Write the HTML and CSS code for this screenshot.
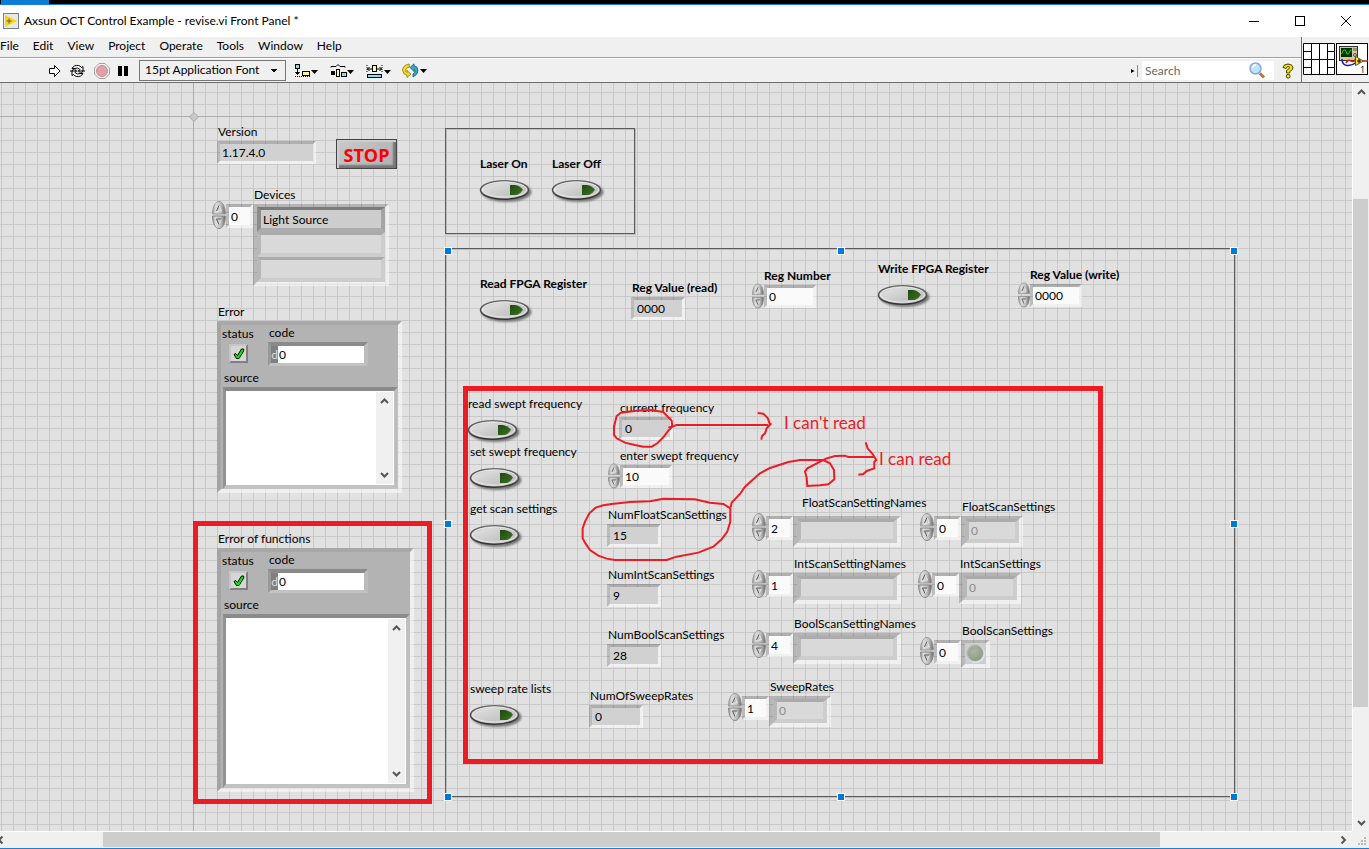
FILE: index.html
```html
<!DOCTYPE html>
<html lang="en">
<head>
<meta charset="utf-8">
<title>Axsun OCT Control Example - revise.vi Front Panel *</title>
<link rel="stylesheet" href="styles.css">
</head>
<body>
<svg class="defs" aria-hidden="true">
  <defs>
    <linearGradient id="pillFace" x1="0" y1="0" x2="1" y2="1">
      <stop offset="0" stop-color="#aeaeae"/><stop offset=".25" stop-color="#dadada"/><stop offset=".6" stop-color="#c8c8c8"/><stop offset="1" stop-color="#bdbdbd"/>
    </linearGradient>
    <linearGradient id="pillEdge" x1="0" y1="0" x2="0" y2="1">
      <stop offset="0" stop-color="#6a6a6a"/><stop offset="1" stop-color="#333"/>
    </linearGradient>
    <linearGradient id="pillLed" x1="0" y1="0" x2="1" y2="1">
      <stop offset="0" stop-color="#1d4a0c"/><stop offset="1" stop-color="#3f7328"/>
    </linearGradient>
    <filter id="soft" x="-20%" y="-40%" width="140%" height="180%"><feGaussianBlur stdDeviation="1.3"/></filter>
    <linearGradient id="spinFace" x1="0" y1="0" x2="1" y2="0">
      <stop offset="0" stop-color="#9a9a9a"/><stop offset=".25" stop-color="#dedede"/><stop offset=".65" stop-color="#bcbcbc"/><stop offset="1" stop-color="#666"/>
    </linearGradient>
    <radialGradient id="ledFace" cx=".4" cy=".35" r=".7">
      <stop offset="0" stop-color="#a9b8a0"/><stop offset="1" stop-color="#8b9a82"/>
    </radialGradient>
  </defs>
  <symbol id="pill" viewBox="0 0 56 28">
    <ellipse cx="29.500" cy="14" rx="25" ry="10" fill="#777" filter="url(#soft)"/>
    <ellipse cx="27.500" cy="12" rx="24" ry="9.200" fill="url(#pillFace)" stroke="url(#pillEdge)" stroke-width="1.500"/>
    <ellipse cx="27.500" cy="11.500" rx="22" ry="7.600" fill="none" stroke="#efefef" stroke-width=".8"/>
    <path d="M33 7h5q5 .8 8 4.800-2.500 4-6 5.200h-7z" fill="url(#pillLed)"/>
  </symbol>
  <symbol id="up" viewBox="0 0 14 14">
    <path d="M.5 13C.8 5 3.500.5 7 .5s6.200 4.500 6.500 12.500z" fill="url(#spinFace)" stroke="#999"/>
    <path d="M4.500 10 7 4.500l2.500 5.500z" fill="#c8c8c8" stroke="#eee" stroke-width=".8"/>
    <path d="M4.500 10 7 4.500" stroke="#555"/>
  </symbol>
  <symbol id="dn" viewBox="0 0 14 14">
    <path d="M.5 1C.8 9 3.500 13.500 7 13.500s6.200-4.500 6.500-12.500z" fill="url(#spinFace)" stroke="#888"/>
    <path d="M4.500 4h5L7 9.500z" fill="#c8c8c8" stroke="#eee" stroke-width=".8"/>
    <path d="M9.500 4h-5L7 9.500" fill="none" stroke="#555"/>
  </symbol>
  <symbol id="chev" viewBox="0 0 9 6"><path d="M1 5 4.500 1.500 8 5" fill="none" stroke="#555" stroke-width="2"/></symbol>
  <symbol id="tick" viewBox="0 0 12 12"><path d="M1 6.500 2.500 5.500 4.500 7.500 8.500 1h2.200v2L6 10.500h-2.500z" fill="#00f000" stroke="#000"/></symbol>
</svg>

<div class="window">
  <div class="backdrop"><span class="backdrop-tab"></span></div>

  <header class="titlebar">
    <svg class="app-icon" viewBox="0 0 16 16"><rect x=".5" y=".5" width="15" height="15" fill="#e8e8e8" stroke="#777f8c"/><path d="M2 2v12l12-6z" fill="#ffd500"/><path d="M3.500 8h5M6 5.500v5" stroke="#50607a"/></svg>
    <h1 class="title">Axsun OCT Control Example - revise.vi Front Panel *</h1>
    <div class="win-buttons">
      <button class="win-btn" aria-label="Minimize"><svg viewBox="0 0 12 12"><path d="M1 6.500h10" stroke="#000"/></svg></button>
      <button class="win-btn" aria-label="Maximize"><svg viewBox="0 0 12 12"><rect x="1.500" y="1.500" width="9" height="9" fill="none" stroke="#000"/></svg></button>
      <button class="win-btn" aria-label="Close"><svg viewBox="0 0 12 12"><path d="M1 1l10 10M11 1 1 11" stroke="#000"/></svg></button>
    </div>
  </header>

  <div class="bars">
    <div class="bars-main">
      <nav class="menu">
        <button>File</button><button>Edit</button><button>View</button><button>Project</button><button>Operate</button><button>Tools</button><button>Window</button><button>Help</button>
      </nav>
      <div class="toolbar">
        <div class="run-tools">
          <button class="tool" aria-label="Run"><svg width="13" height="14" viewBox="0 0 13 14"><path d="M1.500 4.500h5V1.500L12 7l-5.500 5.500v-3h-5z" fill="#fff" stroke="#000"/></svg></button>
          <button class="tool" aria-label="Run Continuously"><svg width="17" height="14" viewBox="0 0 17 14"><g fill="#fff" stroke="#000"><path d="M3 4.500Q5 .8 9.500 1.500q2 .5 3 2L14 2.500V7H9.500L11 5.500Q8.500 3 6 4.500z"/><path d="M14 9.500q-2 3.700-6.500 3-2-.5-3-2L3 11.500V7h4.500L6 8.500q2.500 2.500 5 1z"/><path d="M1 7h2l2-2.500 3 3M16 7h-2l-2 2.500-3-3" fill="none"/></g></svg></button>
          <button class="tool" aria-label="Abort Execution"><svg width="16" height="16" viewBox="0 0 16 16"><path d="M5 .5h6L15.500 5v6L11 15.500H5L.5 11V5z" fill="#f2f2f2" stroke="#a8a0a0"/><circle cx="8" cy="8" r="5.500" fill="#dfa3a6" stroke="#cc9094"/></svg></button>
          <button class="tool" aria-label="Pause"><svg width="10" height="12" viewBox="0 0 10 12"><path d="M0 1h4v10H0zM6 1h4v10H6z"/></svg></button>
        </div>
        <select class="font-select" aria-label="Text Settings"><option>15pt Application Font</option></select>
        <div class="layout-tools">
          <button class="tool" aria-label="Align Objects"><svg width="25" height="14" viewBox="0 0 25 14"><rect x="1.500" y=".5" width="4" height="4" fill="#7fe3f5" stroke="#000"/><path d="M3.500 5v5M1.500 8.500h4l-2 2z" fill="#000" stroke="#000"/><path d="M1 12.500h15" stroke="#000" stroke-dasharray="1 1"/><rect x="8.500" y="7.500" width="7" height="4" fill="#fff6a0" stroke="#000"/><path d="M17 6h7l-3.500 4z"/></svg></button>
          <button class="tool" aria-label="Distribute Objects"><svg width="25" height="14" viewBox="0 0 25 14"><path d="M1 3.500V2.500h5l2-2 2 2h5v1" fill="none" stroke="#000"/><path d="M1 7h4v4H1z"/><rect x="6.500" y="5.500" width="3" height="7" fill="#fff6a0" stroke="#000"/><rect x="11.500" y="8.500" width="5" height="4" fill="#7fe3f5" stroke="#000"/><path d="M17 6h7l-3.500 4z"/></svg></button>
          <button class="tool" aria-label="Resize Objects"><svg width="25" height="14" viewBox="0 0 25 14"><path d="M1 1v8M16 1v8" stroke="#000" stroke-dasharray="1 1"/><path d="M1 5h5M11 5h5M3.500 3 1.500 5l2 2M13.500 3l2 2-2 2" fill="none" stroke="#000"/><rect x="6.500" y="1.500" width="4" height="6" fill="#fff6a0" stroke="#000"/><rect x="1.500" y="10.500" width="14" height="3" fill="#7fe3f5" stroke="#000"/><path d="M18 6h7l-3.500 4z"/></svg></button>
          <button class="tool" aria-label="Reorder"><svg width="25" height="15" viewBox="0 0 25 15"><path d="M7 1Q1 2 .5 7q.5 4.500 4.500 5.500V14.500L9 11 5 7.500V9.500Q3.500 9 4 6.500 4.500 4.500 7.500 4z" fill="#f0dc1c" stroke="#8a7a10" stroke-width=".8"/><path d="M8 4.500 12 .8V2.500q4 1 4 5t-5 6.500v-3q2-1.500 2-3.200T12 6.500v2z" fill="#3aa5c4" stroke="#155e78" stroke-width=".8"/><path d="M18 6h7l-3.500 4z"/></svg></button>
        </div>
        <div class="search-group">
          <svg width="7" height="12" viewBox="0 0 7 12"><path d="M0 4v4l3.500-2z"/><path d="M6.500 0v12" stroke="#888"/></svg>
          <div class="search-box">
            <input class="search" type="text" placeholder="Search" aria-label="Search">
            <svg width="17" height="17" viewBox="0 0 17 17"><path d="M10 10.500l5 5" stroke="#b8714a" stroke-width="3"/><path d="M10.500 10l1 1" stroke="#ddd" stroke-width="3"/><circle cx="6.500" cy="6.500" r="5.500" fill="#bfe3f8" stroke="#8aa7d6" stroke-width="1.500"/><path d="M3.500 6q.5-3 3.500-3.500" fill="none" stroke="#fff" stroke-width="1.500"/></svg>
          </div>
          <button class="tool" aria-label="Show Context Help"><svg width="12" height="16" viewBox="0 0 12 16"><path d="M1 4.500Q1.500 1 6 1t5 3.800Q11 7 7.800 8.500V10H4.500V7.500Q7.500 6 7.500 4.800 7.400 3.500 6 3.500T4.200 5.500z" fill="#f7e600" stroke="#4a4400"/><circle cx="6.200" cy="13.200" r="1.900" fill="#f7e600" stroke="#4a4400"/></svg></button>
        </div>
      </div>
    </div>
    <div class="vi-icons">
      <svg width="32" height="32" viewBox="0 0 32 32"><rect width="32" height="32" fill="#fff"/><path d="M.5.500h31v31H.500zM8.500 0v32M16.500 0v32M24.500 0v32M0 8.500h8M0 16.500h32M0 24.500h8M24 8.500h8M24 24.500h8" fill="none" stroke="#000"/></svg>
      <svg width="32" height="32" viewBox="0 0 32 32"><rect x=".5" y=".5" width="31" height="31" fill="#fff" stroke="#000"/><rect x="3.500" y="3.500" width="18" height="14" fill="#cfc9a0" stroke="#333"/><rect x="5" y="5" width="11" height="9" fill="#003000"/><path d="M5.500 11l2-4 2 0 1.500 4h1.500l2-4h1" fill="none" stroke="#00e040"/><path d="M18 5v3M20 5v3" stroke="#555"/><circle cx="19" cy="12" r="1.500" fill="none" stroke="#555"/><path d="M6 16q0 6 5 6.500 5 .5 9-3" fill="none" stroke="#1020a0" stroke-width="1.500"/><path d="M10 20q2-4 5-2t5-3M27 18h5" fill="none" stroke="#e01010" stroke-width="1.500"/><path d="M19.500 13.500v9l8-4.500z" fill="#ffe600" stroke="#555"/><path d="M21 18h4M23 16v4" stroke="#000"/><text x="24" y="30" class="icon-num">1</text></svg>
    </div>
  </div>

  <div class="work">
    <main class="canvas">
      <span class="axis axis-x"></span><span class="axis axis-y"></span>
      <svg class="origin" viewBox="0 0 10 10"><path d="M5 .5 9.500 5 5 9.500.500 5z" fill="#c8c8c8" stroke="#a8a8a8"/></svg>

      <div class="decor decor-laser"></div>
      <div class="decor decor-main"></div>

      <div class="item version"><label for="version">Version</label><output id="version" class="field wide">1.17.4.0</output></div>
      <button class="stop">STOP</button>

      <label class="free lb-devices" for="dev-i">Devices</label>
      <div class="array ar-devices">
        <span class="spin"><button aria-label="Index up"><svg><use href="#up"/></svg></button><button aria-label="Index down"><svg><use href="#dn"/></svg></button></span>
        <input id="dev-i" class="field index" value="0">
        <div class="frame w-devices"><output class="cell live">Light Source</output><output class="cell"></output><output class="cell"></output></div>
      </div>

      <label class="free lb-err1" for="src1">Error</label>
      <section class="cluster cl-1">
        <div class="cl-row">
          <div class="cl-status"><label for="st1">status</label><button id="st1" class="check"><svg><use href="#tick"/></svg></button></div>
          <div class="cl-code"><label for="cd1">code</label><div class="code"><span class="radix">d</span><input id="cd1" value="0"></div></div>
        </div>
        <label class="cl-source" for="src1">source</label>
        <div class="source"><textarea id="src1"></textarea><div class="mini-scroll"><svg><use href="#chev"/></svg><svg class="down"><use href="#chev"/></svg></div></div>
      </section>

      <label class="free lb-err2" for="src2">Error of functions</label>
      <section class="cluster cl-2">
        <div class="cl-row">
          <div class="cl-status"><label for="st2">status</label><button id="st2" class="check"><svg><use href="#tick"/></svg></button></div>
          <div class="cl-code"><label for="cd2">code</label><div class="code"><span class="radix">d</span><input id="cd2" value="0"></div></div>
        </div>
        <label class="cl-source" for="src2">source</label>
        <div class="source"><textarea id="src2"></textarea><div class="mini-scroll"><svg><use href="#chev"/></svg><svg class="down"><use href="#chev"/></svg></div></div>
      </section>

      <div class="bool bold b-on"><label for="b1">Laser On</label><button id="b1"><svg><use href="#pill"/></svg></button></div>
      <div class="bool bold b-off"><label for="b2">Laser Off</label><button id="b2"><svg><use href="#pill"/></svg></button></div>
      <div class="bool bold b-read"><label for="b3">Read FPGA Register</label><button id="b3"><svg><use href="#pill"/></svg></button></div>
      <div class="bool bold b-write"><label for="b4">Write FPGA Register</label><button id="b4"><svg><use href="#pill"/></svg></button></div>
      <div class="bool b-rsf"><label for="b5">read swept frequency</label><button id="b5"><svg><use href="#pill"/></svg></button></div>
      <div class="bool b-ssf"><label for="b6">set swept frequency</label><button id="b6"><svg><use href="#pill"/></svg></button></div>
      <div class="bool b-gss"><label for="b7">get scan settings</label><button id="b7"><svg><use href="#pill"/></svg></button></div>
      <div class="bool b-srl"><label for="b8">sweep rate lists</label><button id="b8"><svg><use href="#pill"/></svg></button></div>

      <div class="item bold n-regread"><label for="n1">Reg Value (read)</label><output id="n1" class="field">0000</output></div>
      <div class="item n-cur"><label for="n2">current frequency</label><output id="n2" class="field">0</output></div>
      <div class="item n-float"><label for="n3">NumFloatScanSettings</label><output id="n3" class="field">15</output></div>
      <div class="item n-int"><label for="n4">NumIntScanSettings</label><output id="n4" class="field">9</output></div>
      <div class="item n-bool"><label for="n5">NumBoolScanSettings</label><output id="n5" class="field">28</output></div>
      <div class="item n-rates"><label for="n6">NumOfSweepRates</label><output id="n6" class="field">0</output></div>

      <div class="control bold c-regnum"><label for="c1">Reg Number</label><div class="control-row"><span class="spin split"><button aria-label="Increment"><svg><use href="#up"/></svg></button><button aria-label="Decrement"><svg><use href="#dn"/></svg></button></span><input id="c1" class="field edit" value="0"></div></div>
      <div class="control bold c-regwrite"><label for="c2">Reg Value (write)</label><div class="control-row"><span class="spin split"><button aria-label="Increment"><svg><use href="#up"/></svg></button><button aria-label="Decrement"><svg><use href="#dn"/></svg></button></span><input id="c2" class="field edit" value="0000"></div></div>
      <div class="control c-enter"><label for="c3">enter swept frequency</label><div class="control-row"><span class="spin split"><button aria-label="Increment"><svg><use href="#up"/></svg></button><button aria-label="Decrement"><svg><use href="#dn"/></svg></button></span><input id="c3" class="field edit" value="10"></div></div>

      <label class="free lb-fn" for="a1">FloatScanSettingNames</label>
      <div class="array ar-fn"><span class="spin"><button aria-label="Index up"><svg><use href="#up"/></svg></button><button aria-label="Index down"><svg><use href="#dn"/></svg></button></span><input id="a1" class="field index" value="2"><div class="frame w-name"><output class="cell"></output></div></div>
      <label class="free lb-in" for="a2">IntScanSettingNames</label>
      <div class="array ar-in"><span class="spin"><button aria-label="Index up"><svg><use href="#up"/></svg></button><button aria-label="Index down"><svg><use href="#dn"/></svg></button></span><input id="a2" class="field index" value="1"><div class="frame w-name"><output class="cell"></output></div></div>
      <label class="free lb-bn" for="a3">BoolScanSettingNames</label>
      <div class="array ar-bn"><span class="spin"><button aria-label="Index up"><svg><use href="#up"/></svg></button><button aria-label="Index down"><svg><use href="#dn"/></svg></button></span><input id="a3" class="field index" value="4"><div class="frame w-name"><output class="cell"></output></div></div>
      <label class="free lb-fs" for="a4">FloatScanSettings</label>
      <div class="array ar-fs"><span class="spin"><button aria-label="Index up"><svg><use href="#up"/></svg></button><button aria-label="Index down"><svg><use href="#dn"/></svg></button></span><input id="a4" class="field index" value="0"><div class="frame w-num"><output class="cell">0</output></div></div>
      <label class="free lb-is" for="a5">IntScanSettings</label>
      <div class="array ar-is"><span class="spin"><button aria-label="Index up"><svg><use href="#up"/></svg></button><button aria-label="Index down"><svg><use href="#dn"/></svg></button></span><input id="a5" class="field index" value="0"><div class="frame w-num"><output class="cell">0</output></div></div>
      <label class="free lb-bs" for="a6">BoolScanSettings</label>
      <div class="array ar-bs"><span class="spin"><button aria-label="Index up"><svg><use href="#up"/></svg></button><button aria-label="Index down"><svg><use href="#dn"/></svg></button></span><input id="a6" class="field index" value="0"><div class="frame w-led"><svg viewBox="0 0 21 21"><circle cx="11" cy="11" r="9" fill="#e4e4e4"/><circle cx="10" cy="10" r="8.500" fill="#b4b4b4"/><circle cx="10.500" cy="10.500" r="7.500" fill="url(#ledFace)"/></svg></div></div>
      <label class="free lb-sr" for="a7">SweepRates</label>
      <div class="array ar-sr"><span class="spin"><button aria-label="Index up"><svg><use href="#up"/></svg></button><button aria-label="Index down"><svg><use href="#dn"/></svg></button></span><input id="a7" class="field index" value="1"><div class="frame w-num"><output class="cell">0</output></div></div>

      <i class="handle h-nw"></i><i class="handle h-n"></i><i class="handle h-ne"></i><i class="handle h-w"></i><i class="handle h-e"></i><i class="handle h-sw"></i><i class="handle h-s"></i><i class="handle h-se"></i>

      <div class="mark mark-error"></div>
      <div class="mark mark-scan"></div>
      <svg class="ink" aria-hidden="true">
        <g transform="translate(450 297) scale(.3333)">
          <path d="M500 108 513 98 560 92 600 90 640 96 655 112 665 122 667 140 655 152 640 172 622 190 605 200 580 200 555 195 525 188 500 175 492 165 492 140z"/>
          <path d="M655 143 680 135 955 135"/>
          <path d="M485 372 460 376 437 383 418 400 405 425 398 445 398 475 405 488 420 510 445 527 470 536 495 540 650 540 680 530 745 518 790 500 815 478 832 455 841 425 841 385 820 372 780 368 735 358 640 356 600 364 540 366z"/>
        </g>
        <g transform="translate(720 307) scale(.3333)">
          <path d="M113 69 130 71 143 84 148 98 152 102 140 115 135 130 126 138 124 149"/>
          <path d="M32 352 35 338 60 312 75 290 120 250 150 234 205 216 240 210 310 210 330 220 342 240 343 268 325 283 300 286 262 288 260 262 255 245 262 235 318 206 345 198 375 197 385 201 465 201"/>
          <path d="M437 157 443 175 458 192 469 210 463 215 463 235 440 243 430 252 415 254"/>
        </g>
      </svg>
      <p class="note note-cant">I can't read</p>
      <p class="note note-can">I can read</p>
    </main>
    <div class="vscroll"><svg><use href="#chev"/></svg><div class="vtrack"><span class="vthumb"></span></div><svg class="down"><use href="#chev"/></svg></div>
    <div class="hscroll"><svg class="left"><use href="#chev"/></svg><div class="htrack"><span class="hthumb"></span></div><svg class="right"><use href="#chev"/></svg></div>
    <svg class="grip" viewBox="0 0 10 10"><path d="M7 0h2v2H7zM4 3h2v2H4zM7 3h2v2H7zM1 6h2v2H1zM4 6h2v2H4zM7 6h2v2H7z" fill="#bbb"/></svg>
  </div>
</div>
</body>
</html>
```

FILE: styles.css
```css
* { box-sizing: border-box; }
body {
  margin: 0;
  font: 12px/16px Lato, "Open Sans", sans-serif;
  color: #000;
  background: #f0f0f0;
}
button, input, select, textarea {
  margin: 0;
  padding: 0;
  border: 0;
  border-radius: 0;
  background: none;
  font: inherit;
  color: inherit;
}
textarea { resize: none; }
svg { display: block; flex: none; }
.defs { position: absolute; width: 0; height: 0; }

.window {
  display: flex;
  flex-direction: column;
  height: 100vh;
  border-bottom: 1px solid #1c7fd2;
}
.backdrop {
  height: 5px;
  padding-left: 1px;
  background: #000;
  border-bottom: 1px solid #1c7fd2;
}
.backdrop-tab { display: block; width: 48px; height: 4px; background: #0a7cd8; }

/* title bar */
.titlebar {
  display: flex;
  align-items: center;
  height: 32px;
  padding-left: 3px;
  gap: 5px;
  background: #fff;
}
.app-icon { width: 16px; height: 16px; }
.title { margin: 0; font-size: 12px; font-weight: 400; flex: 1; }
.win-buttons { display: flex; }
.win-btn { display: grid; place-items: center; width: 46px; height: 30px; }
.win-btn svg { width: 12px; height: 12px; }

/* menu and toolbar */
.bars { display: flex; background: #f0f0f0; border-bottom: 1px solid #6c6c6c; }
.bars-main { flex: 1; min-width: 0; }
.menu {
  display: flex;
  gap: 14px;
  height: 21px;
  padding-bottom: 2px;
  border-bottom: 1px solid #a0a0a0;
}
.toolbar {
  display: flex;
  align-items: center;
  gap: 8px;
  height: 24px;
  padding-left: 48px;
  border-top: 1px solid #fff;
}
.tool { display: block; }
.run-tools { display: flex; align-items: center; gap: 8px; width: 83px; }
.layout-tools { display: flex; align-items: center; gap: 11px; }
.font-select {
  width: 147px;
  height: 21px;
  padding: 0 0 2px 5px;
  border: 1px solid #777;
  appearance: none;
  background:
    linear-gradient(to bottom right, #000 50%, transparent 50%) 134px 8px / 4px 4px no-repeat,
    linear-gradient(to bottom left, #000 50%, transparent 50%) 130px 8px / 4px 4px no-repeat;
}
.search-group { display: flex; align-items: center; gap: 4px; margin-left: auto; padding-right: 7px; }
.search-box { display: flex; align-items: center; width: 132px; height: 19px; padding: 0 8px 0 3px; background: #fff; }
.search { flex: 1; min-width: 0; height: 19px; }
.search::placeholder { color: #6a6a6a; opacity: 1; }
.search-group .tool { margin-left: 4px; }
.vi-icons { display: flex; gap: 1px; padding: 6px 1px 0; border-left: 1px solid #6c6c6c; }
.icon-num { font: 9px "Open Sans", sans-serif; }

/* work area */
.work {
  flex: 1;
  min-height: 0;
  display: grid;
  grid-template-columns: minmax(0, 1fr) 17px;
  grid-template-rows: minmax(0, 1fr) 17px;
}
.canvas {
  position: relative;
  overflow: hidden;
  background:
    linear-gradient(#c8c8c8 1px, transparent 1px) 0 9px / 12px 12px,
    linear-gradient(90deg, #c8c8c8 1px, transparent 1px) 1px 0 / 12px 12px,
    #e1e1e1;
}
.axis, .origin, .decor, .item, .free, .array, .cluster, .bool, .control, .handle, .mark, .note, .ink, .stop { position: absolute; }
.axis { background: #acacac; }
.axis-x { left: 0; right: 0; top: 33px; height: 1px; }
.axis-y { top: 0; bottom: 0; left: 193px; width: 1px; }
.origin { left: 189px; top: 29px; width: 10px; height: 10px; }

.decor { border: 1px solid #5c5c5c; box-shadow: 1px 1px 0 #bcbcbc, inset 1px 1px 0 #bcbcbc; }
.decor-laser { left: 445px; top: 45px; width: 190px; height: 106px; }
.decor-main { left: 445px; top: 165px; width: 790px; height: 549px; }
.handle { width: 8px; height: 8px; background: #0078d7; border: 1px solid #fff; }
.h-nw, .h-n, .h-ne { top: 164px; }
.h-w, .h-e { top: 437px; }
.h-sw, .h-s, .h-se { top: 710px; }
.h-nw, .h-w, .h-sw { left: 444px; }
.h-n, .h-s { left: 837px; }
.h-ne, .h-e, .h-se { left: 1230px; }

label { display: block; white-space: nowrap; }
.bold label { font-weight: 700; }

/* recessed value fields */
.field {
  display: block;
  width: 54px;
  height: 23px;
  padding-left: 3px;
  line-height: 17px;
  border: 3px solid;
  border-color: rgba(0, 0, 0, .22) rgba(255, 255, 255, .55) rgba(255, 255, 255, .55) rgba(0, 0, 0, .16);
  background: #d1d1d1;
  background-clip: padding-box;
}
.field.wide { width: 99px; padding-left: 2px; }
.field.edit { width: 52px; padding-left: 2px; background-color: #fafafa; }
.field.index { width: 27px; height: 24px; padding-left: 2px; margin-top: 3px; background-color: #fafafa; }
.item label { padding-left: 1px; margin-bottom: 1px; }
.version { left: 217px; top: 41px; }
.n-regread { left: 631px; top: 197px; }
.n-cur { left: 619px; top: 317px; }
.n-float { left: 607px; top: 424px; }
.n-int { left: 607px; top: 484px; }
.n-bool { left: 607px; top: 544px; }
.n-rates { left: 589px; top: 605px; }

/* spinners */
.spin { display: flex; flex-direction: column; width: 14px; flex: none; }
.spin button { display: block; }
.spin svg { width: 14px; height: 14px; }
.split { width: 12px; }
.split svg { width: 12px; height: 13px; }

.control label { padding-left: 12px; margin-bottom: -1px; }
.control-row { display: flex; align-items: center; }
.c-regnum { left: 752px; top: 185px; }
.c-regwrite { left: 1018px; top: 184px; }
.c-enter { left: 608px; top: 365px; }

/* push buttons */
.bool label { padding-left: 3px; margin-bottom: 6px; }
.bool button { display: block; }
.bool svg { width: 56px; height: 28px; }
.b-on { left: 477px; top: 73px; }
.b-off { left: 549px; top: 73px; }
.b-read { left: 477px; top: 193px; }
.b-write { left: 875px; top: 178px; }
.b-rsf { left: 465px; top: 313px; }
.b-ssf { left: 467px; top: 361px; }
.b-gss { left: 467px; top: 418px; }
.b-srl { left: 467px; top: 598px; }

.stop {
  left: 336px;
  top: 56px;
  width: 61px;
  height: 30px;
  padding-top: 2px;
  border: 1px solid #444;
  background: linear-gradient(135deg, #c9c9c9, #b0b0b0);
  box-shadow: inset 2px 2px 0 #cecece, inset -3px -3px 2px #777;
  color: #f00;
  font-family: "Open Sans", sans-serif;
  font-size: 18px;
  font-weight: 700;
}

/* arrays */
.array { display: flex; align-items: flex-start; }
.frame {
  margin-top: 3px;
  border: 4px solid;
  border-width: 3px 4px 4px;
  border-color: rgba(0, 0, 0, .2) rgba(255, 255, 255, .5) rgba(255, 255, 255, .5) rgba(0, 0, 0, .18);
  background: #cecece;
  background-clip: padding-box;
}
.cell {
  display: block;
  height: 24px;
  padding-left: 2px;
  line-height: 17px;
  border: 4px solid;
  border-width: 3px 4px 4px;
  border-color: #ababab #cdcdcd #cdcdcd #b8b8b8;
  background: #d9d9d9;
  color: #8c8c8c;
}
.cell.live { border-color: #7c7c7c #a4a4a4 #acacac #8c8c8c; background: #cdcdcd; color: #000; }
.w-devices { width: 136px; }
.w-devices .cell { height: 25px; line-height: 19px; }
.w-name { width: 108px; }
.w-num { width: 62px; }
.w-led { width: 29px; }
.w-led svg { width: 21px; height: 21px; }
.ar-devices { left: 212px; top: 118px; }
.ar-fn { left: 752px; top: 430px; }
.ar-in { left: 752px; top: 487px; }
.ar-bn { left: 752px; top: 547px; }
.ar-fs { left: 920px; top: 430px; }
.ar-is { left: 918px; top: 487px; }
.ar-bs { left: 920px; top: 554px; }
.ar-sr { left: 728px; top: 610px; }
.lb-devices { left: 254px; top: 104px; }
.lb-err1 { left: 218px; top: 221px; }
.lb-err2 { left: 218px; top: 448px; }
.lb-fn { left: 802px; top: 412px; }
.lb-in { left: 794px; top: 473px; }
.lb-bn { left: 794px; top: 533px; }
.lb-fs { left: 962px; top: 416px; }
.lb-is { left: 960px; top: 473px; }
.lb-bs { left: 962px; top: 540px; }
.lb-sr { left: 770px; top: 596px; }

/* error clusters */
.cluster {
  display: flex;
  flex-direction: column;
  border: 4px solid;
  border-color: #a8a8a8 rgba(255, 255, 255, .5) rgba(255, 255, 255, .5) #a4a4a4;
  background: #b3b3b3;
  background-clip: padding-box;
}
.cl-1 { left: 217px; top: 238px; width: 185px; height: 172px; }
.cl-2 { left: 217px; top: 465px; width: 197px; height: 244px; }
.cl-row { display: flex; gap: 14px; padding-left: 1px; }
.cl-status { width: 32px; padding-top: 1px; }
.check {
  display: grid;
  place-items: center;
  width: 19px;
  height: 19px;
  margin: 2px 0 0 7px;
  background: #d6d6d6;
  border: 2px solid;
  border-color: #c6c6c6 #808080 #808080 #c6c6c6;
}
.check svg { width: 12px; height: 12px; }
.cl-code label { padding-left: 1px; }
.code {
  display: flex;
  width: 100px;
  height: 24px;
  margin-top: 1px;
  border: 4px solid;
  border-width: 4px 4px 3px 3px;
  border-color: #8a8a8a #bcbcbc #c2c2c2 #9a9a9a;
  background: #fff;
}
.radix { width: 7px; background: #808080; color: #ddd; line-height: 17px; text-align: center; }
.code input { flex: 1; min-width: 0; padding-left: 1px; height: 17px; }
.cl-source { padding: 4px 0 0 3px; }
.source {
  flex: 1;
  display: flex;
  margin: 1px 0 0 2px;
  border: 4px solid;
  border-width: 4px 4px 4px 3px;
  border-color: #8a8a8a #bfbfbf #c2c2c2 #929292;
  background: #fff;
}
.source textarea { flex: 1; min-width: 0; outline: 0; }
.mini-scroll {
  display: flex;
  flex-direction: column;
  justify-content: space-between;
  align-items: center;
  width: 17px;
  margin: 1px;
  padding: 6px 0;
  background: #f0f0f0;
}
.mini-scroll svg, .vscroll svg, .hscroll svg { width: 9px; height: 6px; }
.down { transform: rotate(180deg); }
.left { transform: rotate(-90deg); }
.right { transform: rotate(90deg); }

/* annotations */
.mark { border: 5px solid #ed1c24; }
.mark-error { left: 193px; top: 438px; width: 239px; height: 283px; }
.mark-scan { left: 463px; top: 303px; width: 640px; height: 378px; }
.ink { left: 0; top: 0; width: 100%; height: 100%; pointer-events: none; }
.ink path { fill: none; stroke: #ed1c24; stroke-width: 6; }
.note { margin: 0; font-size: 17px; line-height: 20px; color: #ed1c24; white-space: nowrap; }
.note-cant { left: 784px; top: 330px; }
.note-can { left: 879px; top: 366px; }

/* scroll bars */
.vscroll {
  display: flex;
  flex-direction: column;
  align-items: center;
  padding: 6px 0 5px;
  border-left: 1px solid #fff;
}
.vtrack { flex: 1; align-self: stretch; margin-right: 1px; display: flex; flex-direction: column; padding: 6px 0; }
.vtrack::before { content: ""; flex: 98; }
.vthumb { flex: 506; background: #cdcdcd; }
.vtrack::after { content: ""; flex: 107; }
.hscroll { display: flex; align-items: center; border-top: 1px solid #fff; padding-right: 4px; }
.hscroll .left { margin-left: -4px; }
.htrack { flex: 1; align-self: stretch; display: flex; padding-bottom: 1px; }
.htrack::before { content: ""; flex: 98; }
.hthumb { flex: 1057; background: #cdcdcd; }
.htrack::after { content: ""; flex: 179; }
.grip { align-self: end; justify-self: end; width: 10px; height: 10px; margin: 0 2px 1px 0; }
```
